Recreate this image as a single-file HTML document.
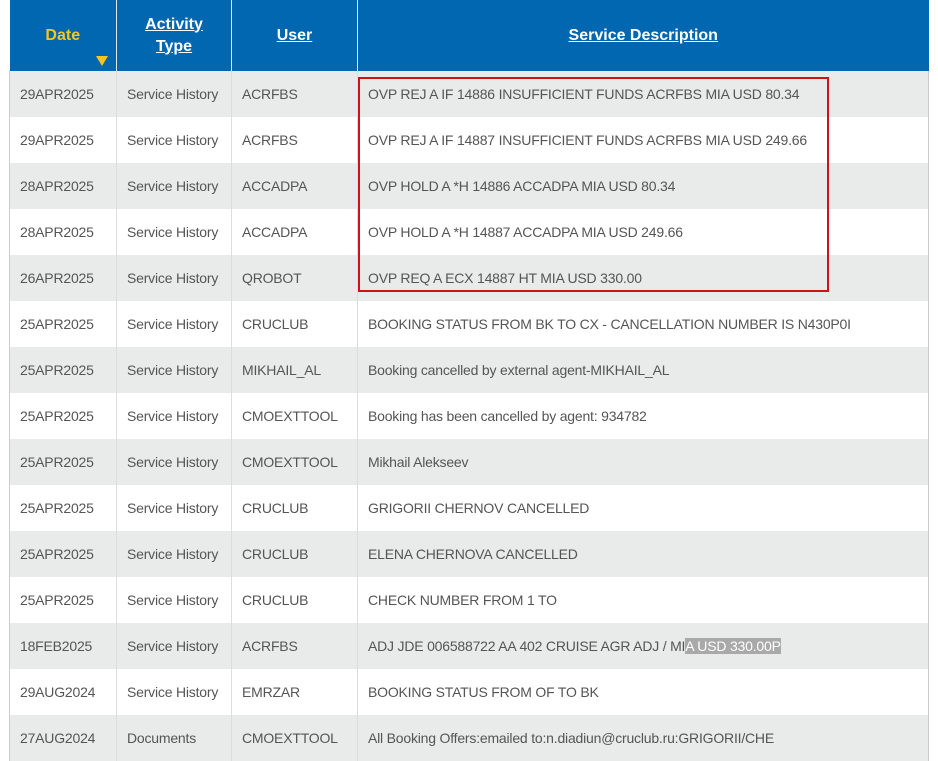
<!DOCTYPE html>
<html><head><style>
body{margin:0;width:938px;height:758px;overflow:hidden;background:#fff;font-family:"Liberation Sans",sans-serif;position:relative}
table{position:absolute;left:9px;top:0;border-collapse:collapse;width:920px;table-layout:fixed}
th{background:#0067b0;color:#fff;height:71px;font-size:16px;line-height:22px;font-weight:bold;text-decoration:underline;border-left:1px solid #e0e8f0;padding:0;position:relative}
th:first-child{border-left:none;color:#f7c51e;text-decoration:none}
td{height:46px;padding:0 0 0 10px;font-size:14px;color:#555;border-left:1px solid #ddd;white-space:nowrap;overflow:hidden;letter-spacing:-0.2px}
td:first-child{border-left:1px solid #ccc}
td:last-child{border-right:1px solid #ccc}
tr:nth-child(odd) td{background:#e9eaea}
.tri{position:absolute;left:86px;top:56px;width:0;height:0;border-left:6px solid transparent;border-right:6px solid transparent;border-top:10px solid #f7c51e}
.box{position:absolute;left:358px;top:77px;width:467px;height:211px;border:2px solid #d0101b}
.hl{background:#a9a9a9;color:#fff}
</style></head><body>
<table>
<colgroup><col style="width:107px"><col style="width:115px"><col style="width:126px"><col></colgroup>
<thead><tr><th>Date<span class="tri"></span></th><th>Activity<br>Type</th><th>User</th><th>Service Description</th></tr></thead>
<tbody>
<tr><td>29APR2025</td><td>Service History</td><td>ACRFBS</td><td>OVP REJ A IF 14886 INSUFFICIENT FUNDS ACRFBS MIA USD 80.34</td></tr>
<tr><td>29APR2025</td><td>Service History</td><td>ACRFBS</td><td>OVP REJ A IF 14887 INSUFFICIENT FUNDS ACRFBS MIA USD 249.66</td></tr>
<tr><td>28APR2025</td><td>Service History</td><td>ACCADPA</td><td>OVP HOLD A *H 14886 ACCADPA MIA USD 80.34</td></tr>
<tr><td>28APR2025</td><td>Service History</td><td>ACCADPA</td><td>OVP HOLD A *H 14887 ACCADPA MIA USD 249.66</td></tr>
<tr><td>26APR2025</td><td>Service History</td><td>QROBOT</td><td>OVP REQ A ECX 14887 HT MIA USD 330.00</td></tr>
<tr><td>25APR2025</td><td>Service History</td><td>CRUCLUB</td><td>BOOKING STATUS FROM BK TO CX - CANCELLATION NUMBER IS N430P0I</td></tr>
<tr><td>25APR2025</td><td>Service History</td><td>MIKHAIL_AL</td><td>Booking cancelled by external agent-MIKHAIL_AL</td></tr>
<tr><td>25APR2025</td><td>Service History</td><td>CMOEXTTOOL</td><td>Booking has been cancelled by agent: 934782</td></tr>
<tr><td>25APR2025</td><td>Service History</td><td>CMOEXTTOOL</td><td>Mikhail Alekseev</td></tr>
<tr><td>25APR2025</td><td>Service History</td><td>CRUCLUB</td><td>GRIGORII CHERNOV CANCELLED</td></tr>
<tr><td>25APR2025</td><td>Service History</td><td>CRUCLUB</td><td>ELENA CHERNOVA CANCELLED</td></tr>
<tr><td>25APR2025</td><td>Service History</td><td>CRUCLUB</td><td>CHECK NUMBER FROM 1 TO</td></tr>
<tr><td>18FEB2025</td><td>Service History</td><td>ACRFBS</td><td>ADJ JDE 006588722 AA 402 CRUISE AGR ADJ / MI<span class="hl">A USD 330.00P</span></td></tr>
<tr><td>29AUG2024</td><td>Service History</td><td>EMRZAR</td><td>BOOKING STATUS FROM OF TO BK</td></tr>
<tr><td>27AUG2024</td><td>Documents</td><td>CMOEXTTOOL</td><td>All Booking Offers:emailed to:n.diadiun@cruclub.ru:GRIGORII/CHE</td></tr>
</tbody></table>
<div class="box"></div>
</body></html>
